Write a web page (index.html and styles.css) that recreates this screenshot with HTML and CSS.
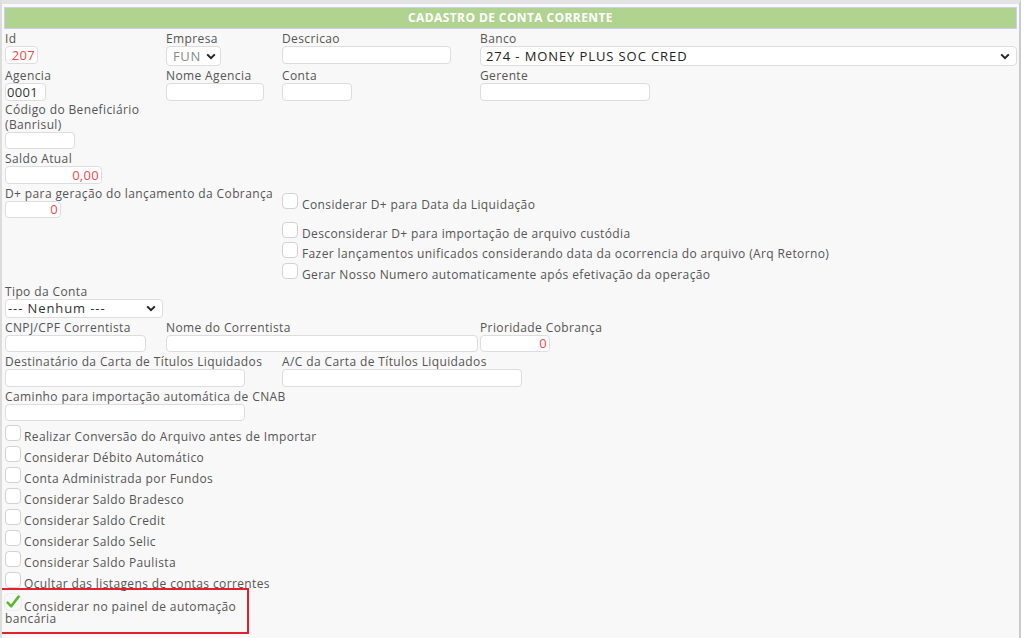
FILE: index.html
```html
<!DOCTYPE html>
<html lang="pt-BR">
<head>
<meta charset="utf-8">
<title>Cadastro de Conta Corrente</title>
<link rel="stylesheet" href="styles.css">
</head>
<body>
<div class="panel">
  <div class="title">CADASTRO DE CONTA CORRENTE</div>
  <div class="form">
    <div class="cols4">
      <div class="field"><label class="lbl">Id</label><input class="inp num w-id" type="text" value="207"></div>
      <div class="field"><label class="lbl">Empresa</label>
        <div class="select sel-emp"><span class="muted">FUN</span><svg class="chev" width="10" height="7" viewBox="0 0 10 7"><path d="M1.2 1.4 L5 5.2 L8.8 1.4" fill="none" stroke="#222" stroke-width="2"/></svg></div>
      </div>
      <div class="field"><label class="lbl">Descricao</label><input class="inp w-desc" type="text"></div>
      <div class="field"><label class="lbl">Banco</label>
        <div class="select sel-banco"><span>274 - MONEY PLUS SOC CRED</span><svg class="chev" width="10" height="7" viewBox="0 0 10 7"><path d="M1.2 1.4 L5 5.2 L8.8 1.4" fill="none" stroke="#222" stroke-width="2"/></svg></div>
      </div>
    </div>
    <div class="cols4 tight">
      <div class="field"><label class="lbl">Agencia</label><input class="inp w-ag" type="text" value="0001"></div>
      <div class="field"><label class="lbl">Nome Agencia</label><input class="inp w-nag" type="text"></div>
      <div class="field"><label class="lbl">Conta</label><input class="inp w-conta" type="text"></div>
      <div class="field"><label class="lbl">Gerente</label><input class="inp w-ger" type="text"></div>
    </div>
    <div class="field"><label class="lbl wrap">Código do Beneficiário (Banrisul)</label><input class="inp w-cod" type="text"></div>
    <div class="field"><label class="lbl">Saldo Atual</label><input class="inp num w-saldo" type="text" value="0,00"></div>
    <div class="split">
      <div class="field dplus"><label class="lbl">D+ para geração do lançamento da Cobrança</label><input class="inp num w-d" type="text" value="0"></div>
      <div class="checks-right">
        <div class="cb-row h29"><span class="cb"></span>Considerar D+ para Data da Liquidação</div>
        <div class="cb-row h20"><span class="cb"></span>Desconsiderar D+ para importação de arquivo custódia</div>
        <div class="cb-row h21"><span class="cb"></span>Fazer lançamentos unificados considerando data da ocorrencia do arquivo (Arq Retorno)</div>
        <div class="cb-row h21"><span class="cb"></span>Gerar Nosso Numero automaticamente após efetivação da operação</div>
      </div>
    </div>
    <div class="field"><label class="lbl">Tipo da Conta</label>
      <div class="select sel-tipo"><span>--- Nenhum ---</span><svg class="chev" width="10" height="7" viewBox="0 0 10 7"><path d="M1.2 1.4 L5 5.2 L8.8 1.4" fill="none" stroke="#222" stroke-width="2"/></svg></div>
    </div>
    <div class="cols3">
      <div class="field"><label class="lbl">CNPJ/CPF Correntista</label><input class="inp w-cnpj" type="text"></div>
      <div class="field"><label class="lbl">Nome do Correntista</label><input class="inp w-ncor" type="text"></div>
      <div class="field"><label class="lbl">Prioridade Cobrança</label><input class="inp num w-prio" type="text" value="0"></div>
    </div>
    <div class="cols2">
      <div class="field"><label class="lbl">Destinatário da Carta de Títulos Liquidados</label><input class="inp w-240" type="text"></div>
      <div class="field"><label class="lbl">A/C da Carta de Títulos Liquidados</label><input class="inp w-240" type="text"></div>
    </div>
    <div class="field"><label class="lbl">Caminho para importação automática de CNAB</label><input class="inp w-240" type="text"></div>
    <div class="checks-left">
      <div class="cb-row h21"><span class="cb"></span>Realizar Conversão do Arquivo antes de Importar</div>
      <div class="cb-row h21"><span class="cb"></span>Considerar Débito Automático</div>
      <div class="cb-row h21"><span class="cb"></span>Conta Administrada por Fundos</div>
      <div class="cb-row h21"><span class="cb"></span>Considerar Saldo Bradesco</div>
      <div class="cb-row h21"><span class="cb"></span>Considerar Saldo Credit</div>
      <div class="cb-row h21"><span class="cb"></span>Considerar Saldo Selic</div>
      <div class="cb-row h21"><span class="cb"></span>Considerar Saldo Paulista</div>
      <div class="cb-row h21"><span class="cb"></span>Ocultar das listagens de contas correntes</div>
      <div class="cb-row checked-row"><span class="cb-check"><svg width="16" height="16" viewBox="0 0 16 16"><path d="M2.6 8.6 L6.2 12.3 L13.6 2.6" fill="none" stroke="#5cb82c" stroke-width="2.6" stroke-linecap="round" stroke-linejoin="round"/></svg></span>Considerar no painel de automação bancária</div>
    </div>
  </div>
</div>
</body>
</html>
```

FILE: styles.css
```css
* { box-sizing: border-box; }
html, body { margin: 0; background: #fff; }
body {
  font-family: "Open Sans", "DejaVu Sans", sans-serif;
  font-size: 12px;
  letter-spacing: 0.38px;
  color: #555;
}
.panel {
  width: 1021px;
  height: 638px;
  overflow: hidden;
  background: #f8f8f8;
  border-top: 4px solid #e3e3e3;
  border-left: 2px solid #dcdcdc;
  border-right: 2px solid #cbcbcb;
  padding: 3px 2px 0 2px;
}
.title {
  height: 22px;
  border: 1px solid #c8cff0;
  background: #b0d48f;
  color: #fff;
  font-weight: 700;
  font-size: 12px;
  letter-spacing: 0.4px;
  line-height: 20px;
  text-align: center;
  margin-bottom: 2px;
}
.form { padding-left: 1px; }
.field { margin-bottom: 2px; }
.lbl { display: block; line-height: 15px; white-space: nowrap; }
.lbl.wrap { white-space: normal; width: 160px; }
.inp {
  display: block;
  height: 17.5px;
  border: 1px solid #dddddd;
  border-radius: 4px;
  background: #fff;
  font-family: "Open Sans", "DejaVu Sans", sans-serif;
  font-size: 13px;
  letter-spacing: 0.3px;
  color: #333;
  padding: 0 2px;
  margin: 0;
  outline: none;
}
.num { text-align: right; color: #f4484a; }
.select {
  display: flex;
  align-items: center;
  justify-content: space-between;
  height: 20px;
  border: 1px solid #dddddd;
  border-radius: 4px;
  background: #fff;
  font-size: 13px;
  letter-spacing: 0.9px;
  color: #222;
  padding: 0 6px 0 5px;
}
.chev { flex: none; }
.muted { color: #888; }
.sel-emp { width: 55px; padding-left: 6px; padding-right: 4px; letter-spacing: 0.6px; }
.sel-banco { width: 100%; }
.sel-tipo { width: 158px; height: 19px; padding-left: 2px; color: #333; }
.w-id { width: 33px; }
.w-desc { width: 169px; }
.w-ag { width: 41px; text-align: left; padding-left: 1px; }
.w-nag { width: 98px; }
.w-conta { width: 70px; }
.w-ger { width: 170px; }
.w-cod { width: 70px; }
.w-saldo { width: 97px; }
.w-d { width: 56px; }
.w-cnpj { width: 141px; }
.w-ncor { width: 312px; }
.w-prio { width: 70px; }
.w-240 { width: 240px; }
.cols4 { display: grid; grid-template-columns: 161px 116px 198px 1fr; }
.cols4.tight .field { margin-bottom: 1px; }
.cols3 { display: grid; grid-template-columns: 161px 314px 1fr; }
.cols2 { display: grid; grid-template-columns: 277px 1fr; }
.split { display: flex; }
.dplus { width: 277px; flex: none; }
.checks-right { padding-top: 7px; }
.cb-row { white-space: nowrap; line-height: 15px; }
.h29 { height: 29px; }
.h20 { height: 20px; }
.h21 { height: 21px; }
.cb {
  display: inline-block;
  width: 16px;
  height: 16px;
  border: 1px solid #d2d2d2;
  border-radius: 4px;
  background: #fff;
  margin-right: 3px;
  vertical-align: baseline;
}
.checks-right .cb { margin-right: 4px; }
.checks-left { margin-top: 3.5px; }
.checked-row {
  position: relative;
  width: 240px;
  white-space: normal;
  line-height: 12.5px;
}
.checked-row::after {
  content: "";
  position: absolute;
  left: -5px;
  top: -5px;
  width: 245px;
  bottom: -8px;
  border: 2px solid #e3212d;
}
.cb-check {
  display: inline-block;
  width: 16px;
  height: 18px;
  margin-right: 3px;
  vertical-align: baseline;
  padding-top: 1px;
}
.cb-check svg {
  display: block;
  border-radius: 5px;
  box-shadow: 0 0 0 1px #ececec;
}
```
